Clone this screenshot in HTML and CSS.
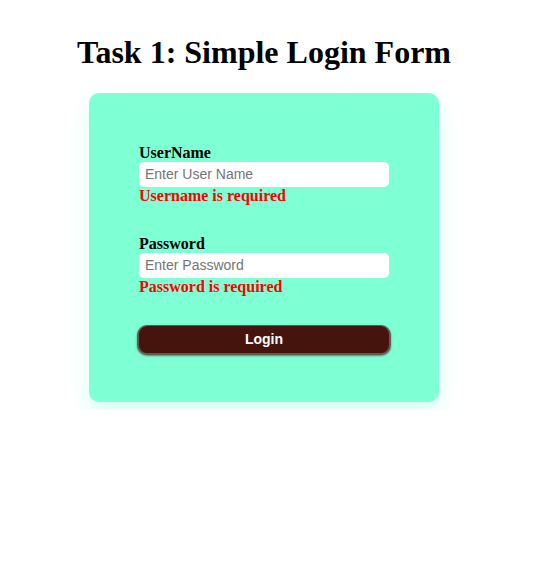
FILE: index.html
```html
<!DOCTYPE html>
<html>
<head>
<meta charset="utf-8">
<link rel="stylesheet" href="styles.css">
</head>
<body>
<div class="page">
  <h1 class="title">Task 1: Simple Login Form</h1>
  <form class="card">
    <div class="field">
      <label class="label" for="u">UserName</label>
      <input class="input" id="u" type="text" placeholder="Enter User Name">
      <div class="error">Username is required</div>
    </div>
    <div class="field">
      <label class="label" for="p">Password</label>
      <input class="input" id="p" type="password" placeholder="Enter Password">
      <div class="error">Password is required</div>
    </div>
    <button class="btn" type="button">Login</button>
  </form>
</div>
</body>
</html>
```

FILE: styles.css
```css
html, body {
  margin: 0;
  padding: 0;
  background: #ffffff;
}
.page {
  padding: 13px 13px 8px 8px;
  display: flex;
  flex-direction: column;
  align-items: center;
  font-family: "Liberation Serif", "Times New Roman", serif;
}
.title {
  font-size: 32px;
  font-weight: bold;
  margin: 21.44px 0;
  line-height: 37px;
  color: #000;
}
.card {
  box-sizing: border-box;
  width: 350px;
  padding: 51px 50px 47px;
  background: #7fffd4;
  border-radius: 10px;
  box-shadow: 0 12px 20px rgba(127, 255, 212, 0.3);
  display: flex;
  flex-direction: column;
  gap: 30px;
}
.field {
  display: flex;
  flex-direction: column;
}
.label {
  font-size: 16px;
  font-weight: bold;
  line-height: 18px;
  color: #000;
}
.input {
  box-sizing: border-box;
  width: 250px;
  height: 25px;
  padding: 0 6px;
  border: none;
  border-radius: 5px;
  background: #fff;
  font-family: "Liberation Sans", Arial, sans-serif;
  font-size: 14px;
  outline: none;
}
.input::placeholder {
  color: #757575;
}
.error {
  font-size: 16px;
  font-weight: bold;
  line-height: 18px;
  color: #ff0000;
}
.btn {
  box-sizing: border-box;
  width: 254px;
  height: 30px;
  margin: -1px 0 0 -2px;
  background: #45140d;
  border: 2px solid #5e5e50;
  border-top-width: 1px;
  border-radius: 10px;
  box-shadow: 0 1px 2px rgba(60, 60, 50, 0.6);
  color: #fff;
  font-family: "Liberation Sans", Arial, sans-serif;
  font-size: 14px;
  font-weight: bold;
  padding: 0;
}
```
